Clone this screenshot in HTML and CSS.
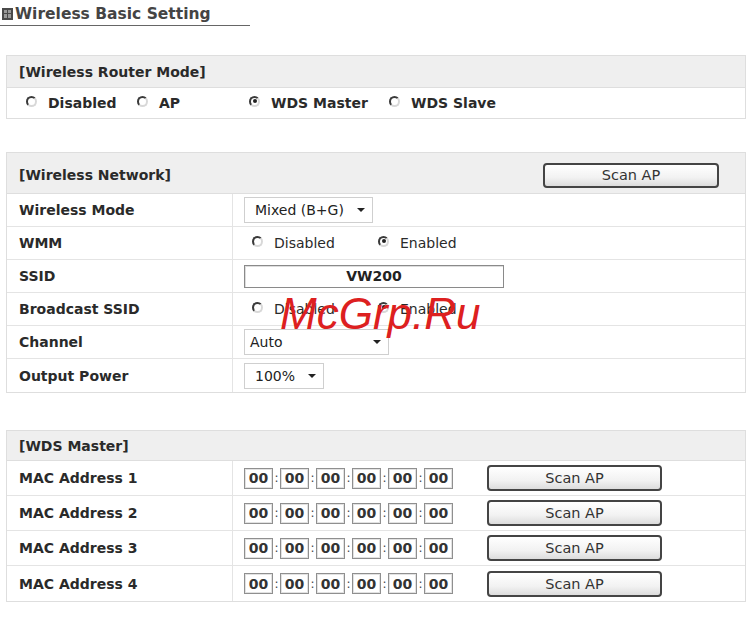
FILE: index.html
```html
<!DOCTYPE html>
<html>
<head>
<meta charset="utf-8">
<link rel="stylesheet" href="styles.css">
</head>
<body>
<div class="page">
  <div class="title">
    <svg class="ticon" width="11" height="12" viewBox="0 0 11 12">
      <rect x="0" y="0" width="11" height="12" fill="#4a4a4a"/>
      <rect x="2" y="2" width="7" height="8" fill="#9a9a9a"/>
      <rect x="2" y="5" width="7" height="1" fill="#4a4a4a"/>
      <rect x="5" y="2" width="1" height="8" fill="#4a4a4a"/>
    </svg>
    <span>Wireless Basic Setting</span>
  </div>

  <div class="panel p1">
    <div class="head h1">[Wireless Router Mode]</div>
    <div class="modes">
      <label class="opt bold w111"><span class="radio"></span>Disabled</label>
      <label class="opt bold w112"><span class="radio"></span>AP</label>
      <label class="opt bold w140"><span class="radio on"></span>WDS Master</label>
      <label class="opt bold"><span class="radio"></span>WDS Slave</label>
    </div>
  </div>

  <div class="panel p2">
    <div class="head h2">
      <span>[Wireless Network]</span>
      <button class="btn btn-top">Scan AP</button>
    </div>
    <div class="row r2">
      <div class="lab">Wireless Mode</div>
      <div class="val"><div class="select s-mode"><span>Mixed (B+G)</span><i class="arr"></i></div></div>
    </div>
    <div class="row r2">
      <div class="lab">WMM</div>
      <div class="val radios">
        <label class="opt w126"><span class="radio"></span>Disabled</label>
        <label class="opt"><span class="radio on"></span>Enabled</label>
      </div>
    </div>
    <div class="row r2">
      <div class="lab">SSID</div>
      <div class="val"><div class="ssid">VW200</div></div>
    </div>
    <div class="row r2">
      <div class="lab">Broadcast SSID</div>
      <div class="val radios">
        <label class="opt w126"><span class="radio"></span>Disabled</label>
        <label class="opt"><span class="radio on"></span>Enabled</label>
      </div>
    </div>
    <div class="row r2">
      <div class="lab">Channel</div>
      <div class="val"><div class="select s-chan"><span>Auto</span><i class="arr"></i></div></div>
    </div>
    <div class="row r2 last">
      <div class="lab">Output Power</div>
      <div class="val"><div class="select s-pow"><span>100%</span><i class="arr"></i></div></div>
    </div>
    <div class="mark">McGrp.Ru</div>
  </div>

  <div class="panel p3">
    <div class="head h3">[WDS Master]</div>
    <div class="row r3">
      <div class="lab">MAC Address 1</div>
      <div class="val">
        <div class="mac"><b>00</b><i>:</i><b>00</b><i>:</i><b>00</b><i>:</i><b>00</b><i>:</i><b>00</b><i>:</i><b>00</b></div>
        <button class="btn btn-mac">Scan AP</button>
      </div>
    </div>
    <div class="row r3">
      <div class="lab">MAC Address 2</div>
      <div class="val">
        <div class="mac"><b>00</b><i>:</i><b>00</b><i>:</i><b>00</b><i>:</i><b>00</b><i>:</i><b>00</b><i>:</i><b>00</b></div>
        <button class="btn btn-mac">Scan AP</button>
      </div>
    </div>
    <div class="row r3">
      <div class="lab">MAC Address 3</div>
      <div class="val">
        <div class="mac"><b>00</b><i>:</i><b>00</b><i>:</i><b>00</b><i>:</i><b>00</b><i>:</i><b>00</b><i>:</i><b>00</b></div>
        <button class="btn btn-mac">Scan AP</button>
      </div>
    </div>
    <div class="row r3 last">
      <div class="lab">MAC Address 4</div>
      <div class="val">
        <div class="mac"><b>00</b><i>:</i><b>00</b><i>:</i><b>00</b><i>:</i><b>00</b><i>:</i><b>00</b><i>:</i><b>00</b></div>
        <button class="btn btn-mac">Scan AP</button>
      </div>
    </div>
  </div>
</div>
</body>
</html>
```
FILE: styles.css
```css
* { box-sizing: border-box; }
html, body { margin: 0; padding: 0; background: #fff; }
body {
  font-family: "DejaVu Sans", Verdana, sans-serif;
  font-size: 14px;
  color: #2a2a2a;
}
.page { width: 750px; height: 629px; overflow: hidden; }

.title {
  display: flex;
  align-items: center;
  gap: 2px;
  height: 26px;
  width: 250px;
  padding-left: 2px;
  padding-top: 3px;
  border-bottom: 1px solid #666;
  font-weight: bold;
  font-size: 15.5px;
  color: #444;
}
.ticon { flex: none; }

.panel {
  position: relative;
  margin-left: 6px;
  width: 740px;
  border: 1px solid #dedede;
}
.p1 { margin-top: 29px; }
.p2 { margin-top: 33px; }
.p3 { margin-top: 37px; }

.head {
  background: #efefef;
  border-bottom: 1px solid #dedede;
  font-weight: bold;
  padding-left: 12px;
  display: flex;
  align-items: center;
}
.h1 { height: 32px; padding-top: 1px; }
.h2 { height: 41px; justify-content: space-between; padding-right: 26px; padding-top: 4px; }
.h3 { height: 30px; }

.modes {
  height: 30px;
  display: flex;
  align-items: center;
  padding-left: 19px;
}

.opt { display: flex; align-items: center; flex: none; }
.bold { font-weight: bold; }
.w111 { width: 111px; }
.w112 { width: 112px; }
.w140 { width: 140px; }
.w126 { width: 126px; }

.radio {
  width: 11px;
  height: 11px;
  border-radius: 50%;
  border: 2px solid #3a3a3a;
  border-right-color: #d8d8d8;
  border-bottom-color: #d8d8d8;
  margin-right: 11px;
  position: relative;
  flex: none;
  margin-top: -4px;
}
.radio.on::after {
  content: "";
  position: absolute;
  left: 1.5px;
  top: 1.5px;
  width: 4px;
  height: 4px;
  border-radius: 50%;
  background: #222;
}

.row {
  display: grid;
  grid-template-columns: 226px 1fr;
  border-bottom: 1px solid #e4e4e4;
}
.row.last { border-bottom: none; }
.r2 { height: 33px; }
.r3 { height: 35px; }
.lab {
  border-right: 1px solid #e4e4e4;
  font-weight: bold;
  padding-left: 12px;
  display: flex;
  align-items: center;
}
.val {
  display: flex;
  align-items: center;
  padding-left: 11px;
}
.radios { padding-left: 19px; }

.select {
  height: 26px;
  border: 1px solid #cfcfcf;
  background: #fff;
  display: flex;
  align-items: center;
  justify-content: space-between;
  padding-left: 10px;
  padding-right: 7px;
  font-size: 14px;
  color: #222;
}
.s-mode { width: 129px; }
.s-chan { width: 145px; padding-left: 5px; }
.s-pow { width: 80px; }
.arr {
  width: 0;
  height: 0;
  border-left: 4px solid transparent;
  border-right: 4px solid transparent;
  border-top: 4px solid #222;
}

.ssid {
  width: 260px;
  height: 23px;
  border: 1px solid #8a8a8a;
  box-shadow: inset 1px 1px 0 #ddd;
  display: flex;
  align-items: center;
  justify-content: center;
  font-weight: bold;
  color: #222;
}

.btn {
  font-family: "DejaVu Sans", Verdana, sans-serif;
  font-size: 14.5px;
  color: #333;
  border: 2px solid #444;
  border-radius: 4px;
  background: linear-gradient(#ffffff, #f2f2f2 60%, #dcdcdc);
  padding: 0;
  display: flex;
  align-items: center;
  justify-content: center;
}
.btn-top { width: 176px; height: 25px; }
.btn-mac { width: 175px; height: 26px; margin-left: 34px; }

.mac { display: flex; align-items: center; }
.mac b {
  width: 29px;
  height: 21px;
  border: 1px solid #8f8f8f;
  box-shadow: inset 0 0 0 1px #e2e2e2;
  display: flex;
  align-items: center;
  justify-content: center;
  font-weight: bold;
  color: #333;
}
.mac i {
  font-style: normal;
  width: 7px;
  text-align: center;
  font-size: 12px;
  color: #444;
}

.mark {
  position: absolute;
  left: 273px;
  top: 139px;
  font-family: "Liberation Sans", Arial, sans-serif;
  font-style: italic;
  font-size: 44px;
  line-height: 1;
  color: #dd2020;
  white-space: nowrap;
}
```
